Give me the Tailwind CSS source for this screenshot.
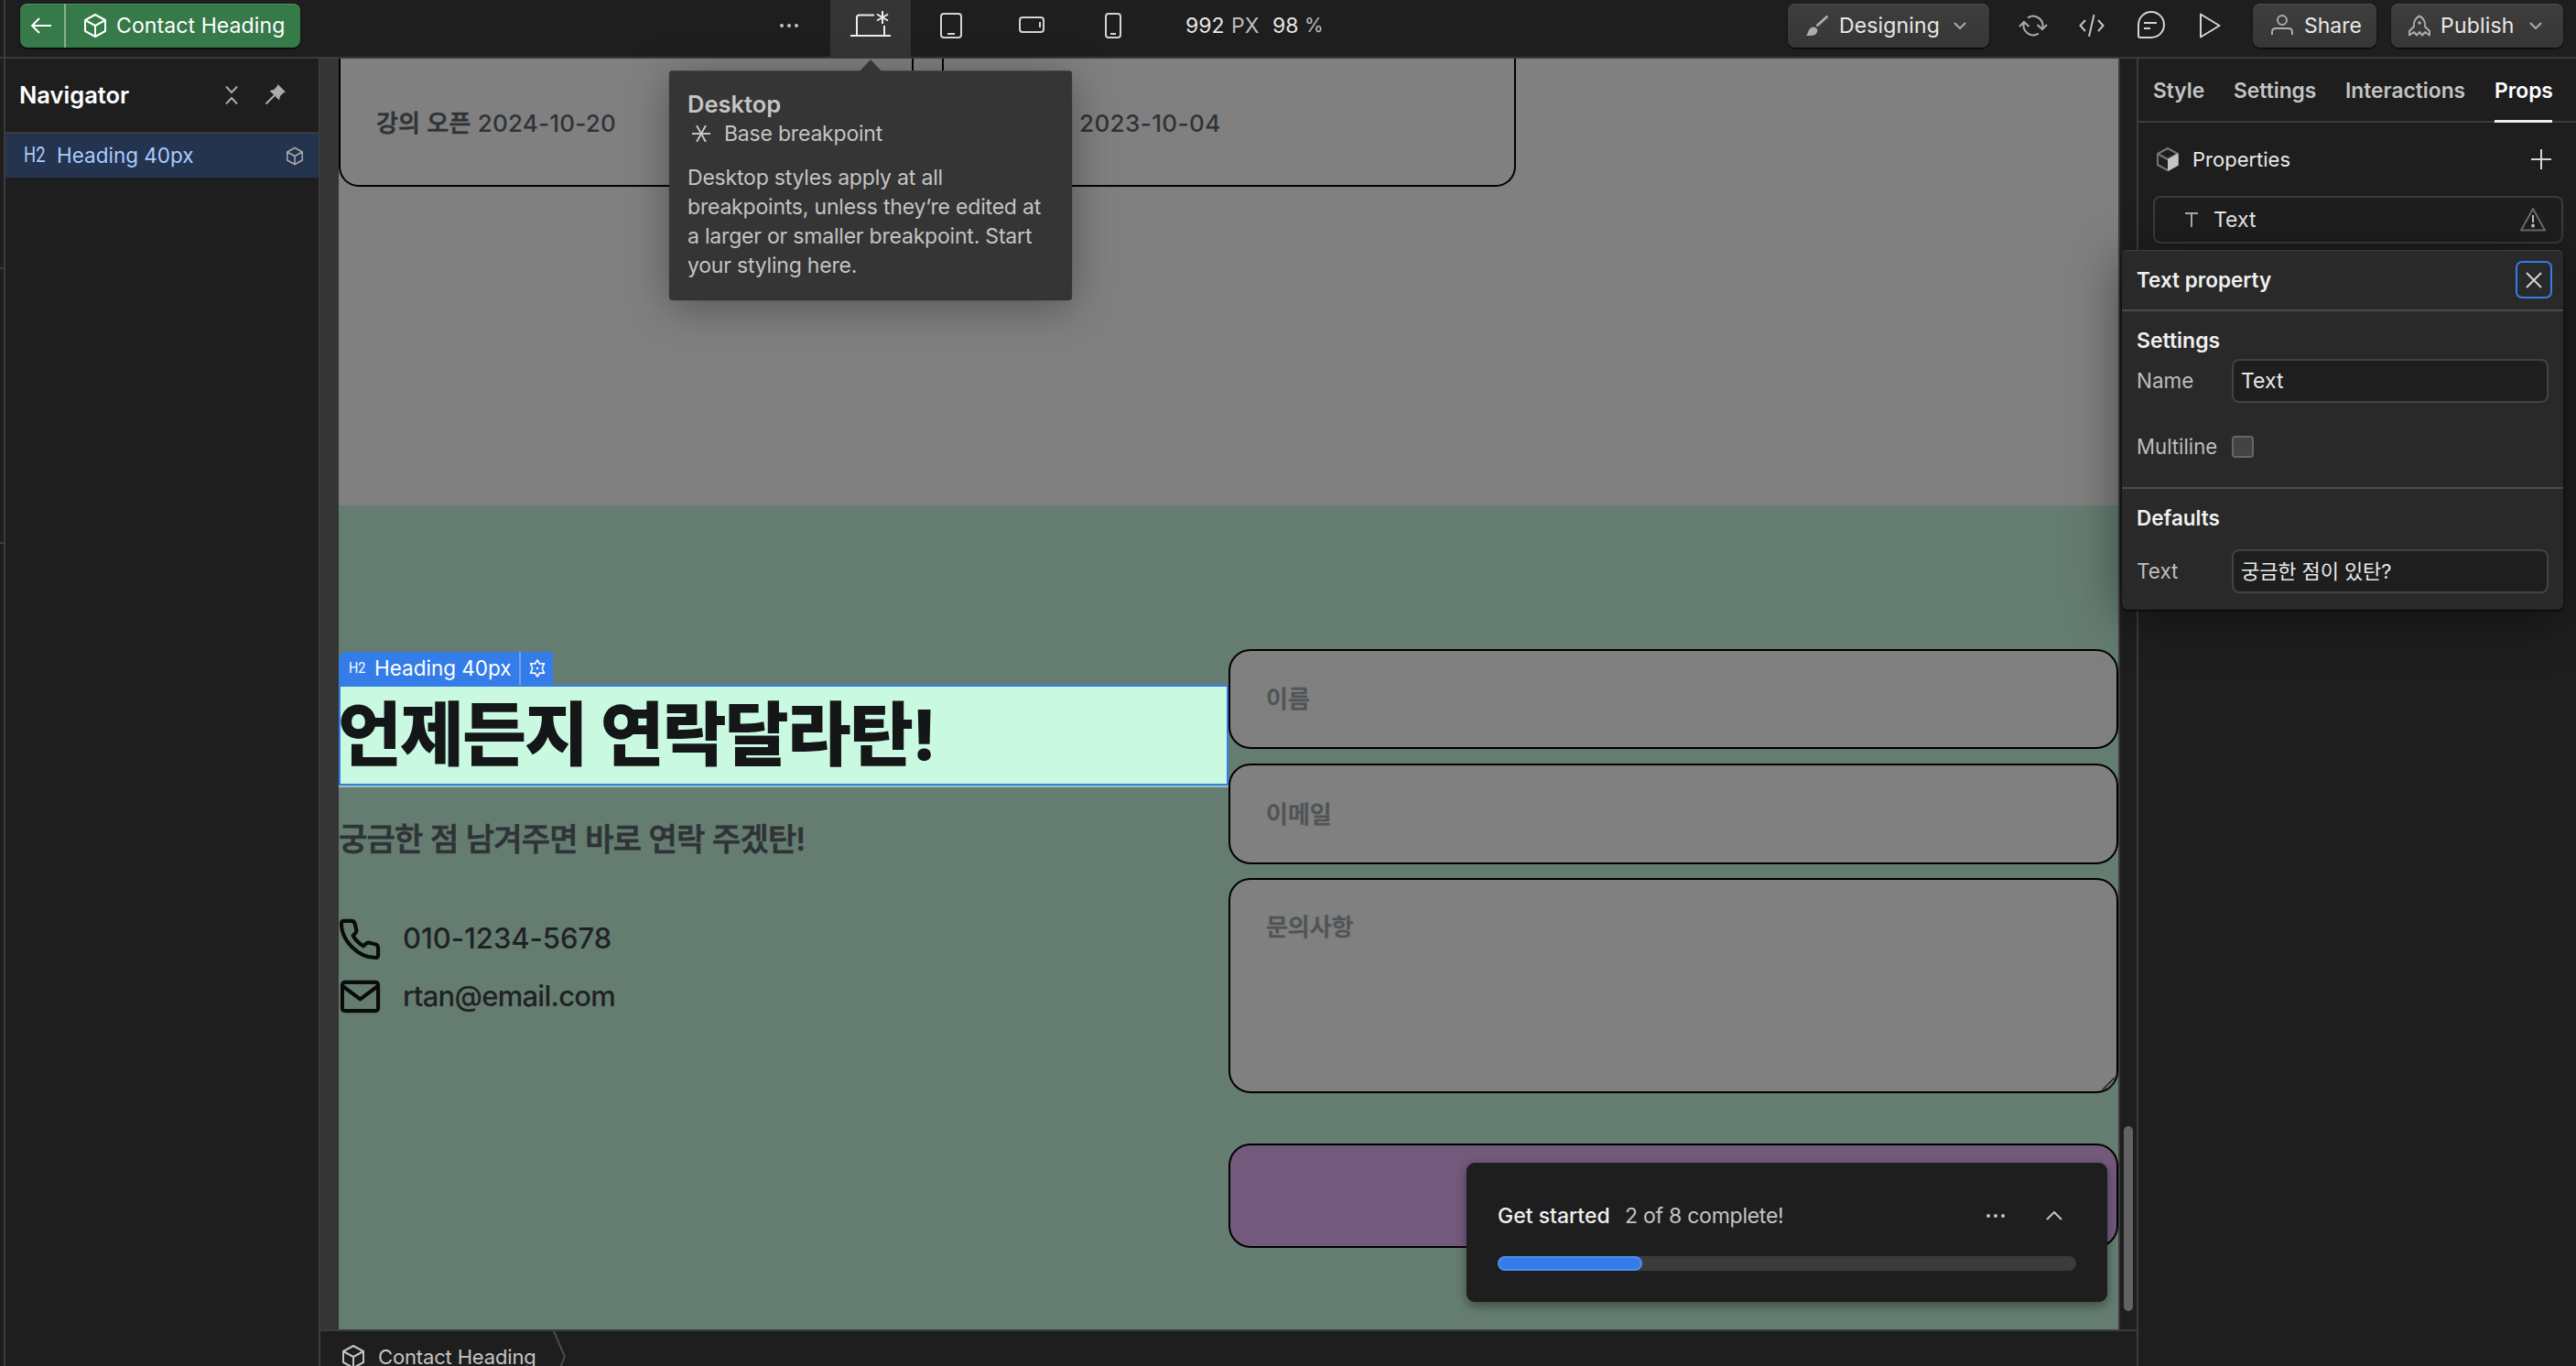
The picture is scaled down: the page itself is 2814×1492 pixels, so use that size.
<!DOCTYPE html>
<html lang="en">
  <head>
    <meta charset="UTF-8" />
    <meta name="viewport" content="width=device-width, initial-scale=1.0" />
    <title>Contact Heading</title>
    <script src="https://cdn.jsdelivr.net/npm/@tailwindcss/browser@4"></script>
  </head>
  <body
    class="flex w-[2814px] h-[1492px] overflow-hidden bg-[#1e1e1e] text-[#e8e8e8] text-[23px] font-[Inter,'Noto_Sans_CJK_KR',sans-serif]"
  >
    <!-- Shared cube icon -->
    <svg class="hidden">
      <symbol id="cube" viewBox="0 0 26 28">
        <path d="M13 2 L24 8 V20 L13 26 L2 20 V8 Z M2 8 L13 14 L24 8 M13 14 V26" fill="none" stroke="currentColor" stroke-width="2" stroke-linejoin="round" />
      </symbol>
    </svg>

    <!-- Left strip -->
    <div class="w-1.5 shrink-0 border-r-2 border-[#3b3b3b]">
      <div class="h-16 border-b-2 border-[#3b3b3b]"></div>
      <div class="h-[230px] border-b-2 border-[#3b3b3b]"></div>
      <div class="h-[300px] border-b-2 border-[#3b3b3b]"></div>
    </div>

    <div class="flex-1 min-w-0 flex flex-col">
      <!-- Top bar -->
      <header class="relative h-16 shrink-0 flex items-start border-b-2 border-[#3b3b3b] pl-4 pr-3.5">
        <div class="mt-1 w-[306px] h-12 flex rounded-lg bg-[#357a48] text-white shadow-[0_1px_2px_#000,inset_0_1px_0_#4f8d60]">
          <button class="w-[50px] pr-0.5 flex items-center justify-center border-r-2 border-[#86b092]">
            <svg class="w-[24px] h-[20px]" viewBox="0 0 24 20" fill="none" stroke="currentColor" stroke-width="2">
              <path d="M23 10 H2 M10 2 L2 10 L10 18" />
            </svg>
          </button>
          <div class="flex items-center pl-[19px]">
            <svg class="w-[26px] h-7"><use href="#cube" /></svg>
            <span class="ml-[10px] tracking-[0.1px] whitespace-nowrap">Contact Heading</span>
          </div>
        </div>

        <div class="ml-[489px] h-full flex text-[#d4d4d4]">
          <button class="w-[90px] pb-1.5 flex items-center justify-center gap-1">
            <span class="size-1 rounded-full bg-[#c4c4c4]"></span>
            <span class="size-1 rounded-full bg-[#c4c4c4]"></span>
            <span class="size-1 rounded-full bg-[#c4c4c4]"></span>
          </button>
          <button class="w-[88px] bg-[#353535] pt-3 flex justify-center items-start">
            <svg class="w-11 h-[30px]" viewBox="0 0 44 30" fill="none" stroke="#ececec" stroke-width="2">
              <path d="M7 26 V7 Q7 4.5 9.500 4.500 H26 M37 16 V26 M0 27 H44" />
              <path d="M35 0 V14 M29 3.500 L41 10.500 M41 3.500 L29 10.500" />
            </svg>
          </button>
          <button class="w-[88px] pb-1.5 flex items-center justify-center">
            <svg class="w-6 h-7" viewBox="0 0 24 28" fill="none" stroke="currentColor" stroke-width="2">
              <rect x="1" y="1" width="22" height="26" rx="3" /><path d="M8 23 H16" />
            </svg>
          </button>
          <button class="w-[88px] pb-2 flex items-center justify-center">
            <svg class="w-7 h-[18px]" viewBox="0 0 28 18" fill="none" stroke="currentColor" stroke-width="2">
              <rect x="1" y="1" width="26" height="16" rx="3" /><path d="M23 6 V12" />
            </svg>
          </button>
          <button class="w-[90px] pb-1.5 flex items-center justify-center">
            <svg class="w-[18px] h-7" viewBox="0 0 18 28" fill="none" stroke="currentColor" stroke-width="2">
              <rect x="1" y="1" width="16" height="26" rx="3" /><path d="M6 23 H12" />
            </svg>
          </button>
          <div class="ml-[34px] mt-1 h-12 flex items-center text-[#e8e8e8]">
            <span class="w-[50px]">992</span><span class="w-[45px] text-[#bdbdbd]">PX</span>
            <span class="w-[35px]">98</span><span class="text-[#bdbdbd] text-[21px]">%</span>
          </div>
        </div>

        <div class="ml-auto mt-1 h-12 flex items-center text-[#bdbdbd]">
          <button class="w-[220px] h-12 flex items-center rounded-lg bg-linear-to-b from-[#3e3e3e] to-[#363636] shadow-[0_1px_2px_#000,inset_0_1px_0_#4c4c4c] pl-5">
            <svg class="w-6 h-[22px]" viewBox="0 0 24 22">
              <path d="M12.500 10.500 L22.500 1.500" stroke="#ababab" stroke-width="3" stroke-linecap="round" />
              <path d="M0 22 C3 19 2 13 8 12.500 C12 13 13.500 16 11.500 19 C10 22 6 22 0 22 Z" fill="#ababab" />
            </svg>
            <span class="ml-3 w-[125px] text-left text-[#e8e8e8] tracking-[0.15px]">Designing</span>
            <svg class="w-3.5 h-2" viewBox="0 0 14 8" fill="none" stroke="#ababab" stroke-width="2"><path d="M1 1 L7 7 L13 1" /></svg>
          </button>
          <svg class="ml-[32px] w-8 h-6" viewBox="0 0 32 24" fill="none" stroke="#ababab" stroke-width="2">
            <path d="M10 3.500 A10.500 10.500 0 0 1 26 15 M22 20.500 A10.500 10.500 0 0 1 6 9" />
            <path d="M20.500 11 L26 16 L31 11 M1 13 L6 8 L11.500 13" />
          </svg>
          <svg class="ml-[34px] w-[28px] h-6" viewBox="0 0 28 24" fill="none" stroke="#c4c4c4" stroke-width="2">
            <path d="M7 6 L1.500 12 L7 18 M21 6 L26.500 12 L21 18 M16.500 0 L11 24" />
          </svg>
          <svg class="ml-[36px] -mt-0.5 w-[30px] h-[30px]" viewBox="0 0 30 30" fill="none" stroke="#d4d4d4" stroke-width="2">
            <path d="M1 15 A14 14 0 1 1 15 29 H3 Q1 29 1 27 Z M7 13 H21 M7 19 H14" />
          </svg>
          <svg class="ml-[38px] w-[23px] h-7" viewBox="0 0 23 28" fill="none" stroke="#d4d4d4" stroke-width="2" stroke-linejoin="round">
            <path d="M1 1.500 L21.500 14 L1 26.500 Z" />
          </svg>
          <button class="ml-[35px] w-[135px] h-12 flex items-center rounded-lg bg-linear-to-b from-[#3e3e3e] to-[#363636] shadow-[0_1px_2px_#000,inset_0_1px_0_#4c4c4c] pl-5">
            <svg class="-mt-0.5 w-6 h-[22px]" viewBox="0 0 24 22" fill="none" stroke="#ababab" stroke-width="2">
              <circle cx="12" cy="6" r="5" /><path d="M1 22 V19 Q1 15 5 15 H19 Q23 15 23 19 V22" />
            </svg>
            <span class="ml-3 text-[#e8e8e8]">Share</span>
          </button>
          <button class="ml-4 w-[188px] h-12 flex items-center rounded-lg bg-linear-to-b from-[#3e3e3e] to-[#363636] shadow-[0_1px_2px_#000,inset_0_1px_0_#4c4c4c] pl-[19px]">
            <svg class="w-6 h-6" viewBox="0 0 24 24" fill="none" stroke="#ababab" stroke-width="2">
              <path d="M6 13 C5 8 8 3.500 12 1.500 C16 3.500 19 8 18 13 L23 18 V22.500 L18 19 L15 22.500 L12 19 L9 22.500 L6 19 L1 22.500 V18 Z" stroke-linejoin="round" />
              <circle cx="12" cy="9" r="1.800" fill="#ababab" stroke="none" />
            </svg>
            <span class="ml-[11px] w-[97px] text-left text-[#e8e8e8] tracking-[0.2px]">Publish</span>
            <svg class="w-3.5 h-2" viewBox="0 0 14 8" fill="none" stroke="#ababab" stroke-width="2"><path d="M1 1 L7 7 L13 1" /></svg>
          </button>
        </div>

        <!-- Breakpoint tooltip -->
        <div class="absolute z-10 left-[725px] top-[77px] w-[440px] h-[250px] rounded-[4px] bg-[#353535] text-[#c4c4c4] px-[20px] pt-[21px] shadow-[0_8px_48px_rgba(0,0,0,0.35),0_1px_1px_rgba(0,0,0,0.6),inset_0_1px_0_#444]">
          <svg class="absolute -top-3 left-[208px] w-6 h-[13px]" viewBox="0 0 24 13"><path d="M0 13 L12 0 L24 13 Z" fill="#353535" /></svg>
          <p class="h-8 leading-8 text-[25.500px] font-semibold">Desktop</p>
          <p class="h-8 flex items-center tracking-[-0.2px]">
            <svg class="mx-[5px] w-5 h-[18px]" viewBox="0 0 20 18" stroke="#c4c4c4" stroke-width="2"><path d="M0 9 H20 M5 0 L15 18 M15 0 L5 18" /></svg>
            <span class="ml-2.5">Base breakpoint</span>
          </p>
          <p class="mt-4 leading-8 tracking-[-0.2px] whitespace-nowrap">
            Desktop styles apply at all<br />breakpoints, unless they’re edited at<br />a larger or smaller breakpoint. Start<br />your styling here.
          </p>
        </div>
      </header>

      <div class="flex-1 min-h-0 flex">
        <!-- Navigator -->
        <aside class="w-[344px] shrink-0 border-r-2 border-[#3b3b3b]">
          <div class="h-[82px] flex items-center border-b-2 border-[#3b3b3b] pl-[15px]">
            <h2 class="w-[225px] text-[25.5px] font-semibold text-white">Navigator</h2>
            <svg class="w-3.5 h-5" viewBox="0 0 14 20" fill="none" stroke="#ababab" stroke-width="2">
              <path d="M1 0.500 L7 7 L13 0.500 M1 19.500 L7 13 L13 19.500" />
            </svg>
            <svg class="ml-[30px] -mt-0.5 w-[22px] h-[22px]" viewBox="0 0 22 22" fill="#ababab">
              <path d="M13.500 0 L22 8.500 L19.500 9.500 L16 13 L15 17.500 L4.500 7 L9 6 L12.500 2.500 Z" />
              <path d="M10 12 L0.500 21.500" stroke="#ababab" stroke-width="2" />
            </svg>
          </div>
          <div class="h-12 flex items-center bg-[#24344f] text-[#a9ccff] pl-5 pr-4">
            <span class="w-[36px] shrink-0"><span class="inline-block origin-left scale-x-[0.8] font-[Roboto]">H2</span></span>
            <span class="text-[22.500px]">Heading 40px</span>
            <svg class="ml-auto w-5 h-[21px] text-[#ababab]"><use href="#cube" /></svg>
          </div>
        </aside>

        <main class="flex-1 min-w-0 flex flex-col">
          <div class="h-[1388px] shrink-0 flex">
            <div class="w-5 bg-[#353535]"></div>
            <!-- Page canvas -->
            <div class="relative w-[1944px] flex flex-col bg-[#808080] text-[#2f3337] font-medium">
              <section class="h-[488px] flex gap-[31px] text-[26px] tracking-[0.2px]">
                <div class="w-[628px] h-[140px] border-2 border-t-0 border-black rounded-b-[22px] pl-[39px] pt-[55px] leading-8"><span class="[-webkit-text-stroke:0.7px]">강의 오픈</span> 2024-10-20</div>
                <div class="w-[627px] h-[140px] border-2 border-t-0 border-black rounded-b-[22px] pl-[148px] pt-[55px] leading-8 tracking-[0.4px]">2023-10-04</div>
              </section>

              <section class="flex-1 flex bg-[#657d70]">
                <div class="w-[972px] pt-40">
                  <!-- Selection label -->
                  <div class="w-[234px] h-9 flex items-center rounded-tl-[8px] bg-[#347ce8] text-white font-normal">
                    <span class="w-[39px] shrink-0 pl-[11px] text-[17px]"><span class="inline-block origin-left scale-x-[0.85] font-[Roboto]">H2</span></span>
                    <span class="w-[158px] text-[22.500px]">Heading 40px</span>
                    <span class="w-[37px] h-9 flex items-center justify-center border-l-2 border-[#6fa2ee]">
                      <svg class="w-[18px] h-[20px]" viewBox="0 0 18 20" fill="none" stroke="#fff" stroke-width="1.600" stroke-linejoin="round">
                        <path d="M9 1 L11.500 5 L16.500 4.800 L14.300 10 L16.500 15.200 L11.500 15 L9 19 L6.500 15 L1.500 15.200 L3.700 10 L1.500 4.800 L6.500 5 Z" />
                        <circle cx="9" cy="10" r="1.300" fill="#fff" stroke="none" />
                      </svg>
                    </span>
                  </div>
                  <h2 class="h-[110px] border-2 border-[#347ce8] bg-[#c9fae1] text-[#141618] text-[76px] leading-[105px] font-extrabold tracking-[-1.9px] whitespace-nowrap"><span class="-ml-[3px]">언제든지 연락달라탄!</span></h2>
                  <div class="h-0.5 bg-[#9dc4ae]"></div>
                  <p class="mt-[33px] h-12 leading-[48px] text-[34px] tracking-[-0.75px] [-webkit-text-stroke:0.8px]">궁금한 점 남겨주면 바로 연락 주겠탄!</p>
                  <div class="mt-[61px] h-[47px] flex items-center gap-[23px] text-[31px] text-[#1f2225]">
                    <svg class="w-[47px] h-[47px]" viewBox="0 0 24 24" fill="none" stroke="#0a0c0b" stroke-width="2.100" stroke-linejoin="round">
                      <path d="M3 2 H7 Q8.600 2 9 3.500 L9.800 6.800 Q10.100 8 9.200 8.900 L8 10.200 C9.500 12.800 11.200 14.500 13.800 16 L15.100 14.800 Q16 13.900 17.200 14.200 L20.500 15 Q22 15.400 22 17 V21 Q22 22.500 20.500 22.500 C11 22.500 1.500 13 1.500 3.500 Q1.500 2 3 2 Z" />
                    </svg>
                    <span class="tracking-[-0.05px]">010-1234-5678</span>
                  </div>
                  <div class="mt-4 h-[47px] flex items-center gap-[23px] text-[31px] text-[#1f2225]">
                    <svg class="w-[47px] h-[47px]" viewBox="0 0 24 24" fill="none" stroke="#0a0c0b" stroke-width="2.100" stroke-linejoin="round">
                      <rect x="2" y="4" width="20" height="16" rx="1.500" /><path d="M2 6 L12 13.500 L22 6" />
                    </svg>
                    <span class="tracking-[-0.74px]">rtan@email.com</span>
                  </div>
                </div>

                <!-- Contact form -->
                <form class="w-[972px] pt-[157px] text-[26px] text-[#4f5457] [-webkit-text-stroke:0.7px]">
                  <div class="h-[109px] flex items-center rounded-[24px] border-2 border-black bg-[#808080] pl-[39px]">이름</div>
                  <div class="mt-4 h-[110px] flex items-center rounded-[24px] border-2 border-black bg-[#808080] pl-[39px]">이메일</div>
                  <div class="relative mt-[15px] h-[235px] rounded-[24px] border-2 border-black bg-[#808080] pl-[39px] pt-[36px] leading-8 tracking-[-0.1px]">
                    문의사항
                    <svg class="absolute right-0 bottom-0 w-4 h-4" viewBox="0 0 16 16" fill="none" stroke="#1d1d1d" stroke-width="1.500"><path d="M1 14 L14 1 M7 14 L14 6" /></svg>
                  </div>
                  <div class="mt-[55px] h-[114px] rounded-[24px] border-2 border-black bg-[#735a7d]"></div>
                </form>
              </section>

              <!-- Onboarding card -->
              <div class="absolute left-[1232px] top-[1206px] w-[700px] h-[152px] rounded-[9px] bg-[#1e1e1e] px-[34px] pt-[42px] font-normal shadow-[0_4px_12px_rgba(0,0,0,0.4)]">
                <div class="h-8 flex items-center text-[#c4c4c4]">
                  <span class="w-[139px] font-medium text-[#f0f0f0]">Get started</span>
                  <span class="tracking-[-0.25px]">2 of 8 complete!</span>
                  <span class="ml-auto flex gap-1">
                    <span class="size-1 rounded-full bg-[#c4c4c4]"></span>
                    <span class="size-1 rounded-full bg-[#c4c4c4]"></span>
                    <span class="size-1 rounded-full bg-[#c4c4c4]"></span>
                  </span>
                  <svg class="ml-[45px] mr-[15px] w-[18px] h-2.5" viewBox="0 0 18 10" fill="none" stroke="#c4c4c4" stroke-width="2"><path d="M1 9 L9 1 L17 9" /></svg>
                </div>
                <div class="mt-7 h-4 rounded-full bg-[#3b3b3b]">
                  <div class="w-[158px] h-4 rounded-full bg-[#347ce8] border-2 border-[#4d8df0]"></div>
                </div>
              </div>
            </div>
            <!-- Scrollbar -->
            <div class="flex-1 border-x-2 border-[#3b3b3b] pl-1 pt-[1166px]">
              <div class="w-2.5 h-[202px] rounded-full bg-[#626262]"></div>
            </div>
          </div>

          <!-- Breadcrumb -->
          <footer class="relative flex-1 min-h-0 flex items-start border-t-2 border-r-2 border-[#3b3b3b] pl-[23px] overflow-hidden text-[#c4c4c4]">
            <svg class="mt-[14px] w-[26px] h-7 shrink-0"><use href="#cube" /></svg>
            <span class="ml-3.5 mt-3 h-8 leading-8 text-[22px] tracking-[-0.15px]">Contact Heading</span>
            <svg class="ml-[18px] w-4 h-[56px] shrink-0" viewBox="0 0 16 56" fill="none" stroke="#4a4a4a" stroke-width="2"><path d="M1 0 L13 28 L1 56" /></svg>
          </footer>
        </main>

        <!-- Right panel -->
        <aside class="relative w-[478px] shrink-0">
          <nav class="h-[70px] flex border-b-2 border-[#3b3b3b] pl-4 font-semibold text-[22.800px] text-[#c4c4c4]">
            <a class="w-[88px] leading-[70px] h-[70px]">Style</a>
            <a class="w-[122px] leading-[70px] h-[70px]">Settings</a>
            <a class="w-[163px] leading-[70px] h-[70px]">Interactions</a>
            <a class="w-[63px] leading-[70px] h-[70px] text-white border-b-[3px] border-[#ececec] whitespace-nowrap">Props</a>
          </nav>
          <div class="h-20 flex items-center pl-5 pr-[27px]">
            <svg class="w-6 h-[26px]" viewBox="0 0 24 26" fill="none" stroke="#757575" stroke-width="2" stroke-linejoin="round">
              <path d="M12 1 L23 7 V19 L12 25 L1 19 V7 Z M1 7 L12 13 L23 7" /><path d="M12 13 L23.500 6.500 V19.500 L12 26 Z" fill="#c4c4c4" stroke="none" />
            </svg>
            <span class="ml-[15px] text-[22px]">Properties</span>
            <svg class="ml-auto w-[22px] h-[22px]" viewBox="0 0 22 22" stroke="#d4d4d4" stroke-width="2"><path d="M0 11 H22 M11 0 V22" /></svg>
          </div>
          <div class="ml-4 mr-3.5 h-[52px] flex items-center rounded-lg border-2 border-[#3b3b3b] pl-[33px] pr-[17px]">
            <svg class="w-3.5 h-4" viewBox="0 0 14 16" stroke="#ababab" stroke-width="2"><path d="M0 1 H14 M7 1 V16" /></svg>
            <span class="ml-[17px]">Text</span>
            <svg class="ml-auto w-7 h-[26px]" viewBox="0 0 28 26" fill="none" stroke="#6c6c6c" stroke-width="2" stroke-linejoin="round">
              <path d="M14 1 L27 24.500 H1 Z" /><path d="M14 8 V16" stroke="#c4c4c4" /><circle cx="14" cy="19.500" r="1.900" fill="#c4c4c4" stroke="none" />
            </svg>
          </div>

          <!-- Text property popover -->
          <div class="absolute z-10 -left-[18px] top-[209px] w-[482px] h-[393px] rounded-[6px] bg-[#292929] text-[#bdbdbd] shadow-[0_8px_60px_rgba(0,0,0,0.45),0_1px_2px_#000,inset_0_1px_0_#3d3d3d]">
            <div class="h-[67px] flex items-center justify-between border-b-2 border-[#4a4a4a] pl-4 pr-3">
              <h3 class="text-[22.500px] font-semibold text-[#f0f0f0]">Text property</h3>
              <button class="w-10 h-[41px] flex items-center justify-center rounded-[7px] border-2 border-[#347ce8]">
                <svg class="w-[18px] h-[18px]" viewBox="0 0 18 18" stroke="#d4d4d4" stroke-width="2"><path d="M1 1 L17 17 M17 1 L1 17" /></svg>
              </button>
            </div>
            <div class="h-[194px] border-b-2 border-[#4a4a4a] px-4 pt-4">
              <h4 class="h-8 leading-8 font-semibold text-[#f0f0f0]">Settings</h4>
              <div class="mt-1 h-12 flex items-center">
                <span class="w-[104px] text-[22.500px]">Name</span>
                <div class="w-[346px] h-12 flex items-center rounded-lg border-2 border-[#424242] bg-[#1e1e1e] pl-2 text-[#e8e8e8]">Text</div>
              </div>
              <div class="mt-8 h-8 flex items-center">
                <span class="w-[104px] text-[22.200px]">Multiline</span>
                <span class="size-6 rounded-[4px] border-2 border-[#666] bg-[#434343]"></span>
              </div>
            </div>
            <div class="px-4 pt-4">
              <h4 class="h-8 leading-8 text-[22.500px] font-semibold text-[#f0f0f0]">Defaults</h4>
              <div class="mt-[18px] h-12 flex items-center">
                <span class="w-[104px] text-[22.500px]">Text</span>
                <div class="w-[346px] h-12 flex items-center rounded-lg border-2 border-[#424242] bg-[#1e1e1e] pl-2 text-[22px] tracking-[-0.1px] text-[#e8e8e8]">궁금한 점이 있탄?</div>
              </div>
            </div>
          </div>
        </aside>
      </div>
    </div>
  </body>
</html>
